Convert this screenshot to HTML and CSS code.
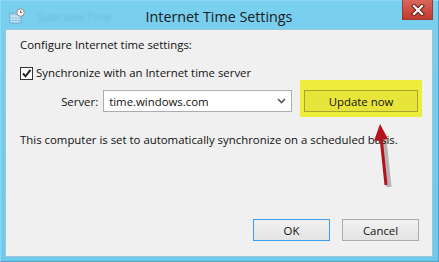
FILE: index.html
```html
<!DOCTYPE html>
<html lang="en">
<head>
    <meta charset="UTF-8">
    <title>Internet Time Settings</title>
    <link rel="stylesheet" href="styles.css">
</head>
<body>

    <div class="window">
        <div class="titlebar">
            <svg class="app-icon" width="16" height="16" viewBox="0 0 16 16">
                <rect x="1" y="5" width="11" height="10" fill="#dff3fb" stroke="#6aa6c8"/>
                <rect x="1" y="5" width="11" height="2" fill="#8cc3e0"/>
                <path d="M4 7v8M7 7v8M10 7v8M1 10h11M1 12.5h11" stroke="#8cc3e0" stroke-width="1"/>
                <circle cx="11.5" cy="4.5" r="3.8" fill="#f4f4f4" stroke="#8a8a8a"/>
                <path d="M11.5 2.5v2h1.6" stroke="#555" fill="none" stroke-width="0.9"/>
            </svg>
            <div class="ghost-title">Date and Time</div>
            <div class="title">Internet Time Settings</div>
            <div class="close">
                <svg width="14" height="12" viewBox="0 0 14 12">
                    <path d="M3 2l8 8M11 2l-8 8" stroke="#5a1a14" stroke-width="4" stroke-linecap="square"/>
                    <path d="M3 2l8 8M11 2l-8 8" stroke="#ffffff" stroke-width="2.2" stroke-linecap="square"/>
                </svg>
            </div>
        </div>

        <div class="content">
            <p class="intro">Configure Internet time settings:</p>

            <label class="check-row">
                <span class="checkbox">
                    <svg width="11" height="11" viewBox="0 0 11 11">
                        <path d="M2 5.5l2.5 2.8L9.5 1.8" stroke="#222" stroke-width="2" fill="none"/>
                    </svg>
                </span>
                Synchronize with an Internet time server
            </label>

            <div class="server-row">
                <span class="server-label">Server:</span>
                <div class="combo">
                    <span>time.windows.com</span>
                    <svg width="9" height="6" viewBox="0 0 9 6">
                        <path d="M1 1l3.5 3.5L8 1" stroke="#555" stroke-width="1.6" fill="none"/>
                    </svg>
                </div>
                <div class="highlight">
                    <button class="button update">Update now</button>
                </div>
            </div>

            <p class="info">This computer is set to automatically synchronize on a scheduled basis.</p>

            <div class="actions">
                <button class="button default">OK</button>
                <button class="button">Cancel</button>
            </div>

            <!-- annotation arrow -->
            <svg class="arrow" width="30" height="70" viewBox="0 0 30 70">
                <path d="M15 64L10 16" stroke="rgba(0,0,0,0.25)" stroke-width="5" fill="none"/>
                <path d="M12 62L7 14" stroke="#b5101c" stroke-width="3" fill="none"/>
                <path d="M6 1L0 18L14 16Z" fill="#b5101c"/>
            </svg>
        </div>
    </div>

</body>
</html>
```

FILE: styles.css
```css
body {
    margin: 0;
    padding: 0;
    background-color: #ffffff;
    font-family: "Open Sans", "Noto Sans", sans-serif;
}
.window {
    position: relative;
    width: 428px;
    height: 257px;
    padding: 0 5px 3px 4px;
    background: linear-gradient(#79cfee, #6ecaec);
    border: 1px solid #4f9fc4;
    border-top-color: #8fd8f3;
    border-left-color: #8fd8f3;
}
.titlebar {
    position: relative;
    height: 28px;
    display: flex;
    align-items: center;
}
.app-icon {
    margin: 2px 0 0 4px;
}
.ghost-title {
    margin-left: 12px;
    margin-top: 3px;
    font-size: 11px;
    color: rgba(60, 110, 140, 0.2);
    filter: blur(1px);
}
.title {
    position: absolute;
    left: 50%;
    top: 6px;
    transform: translateX(-50%);
    white-space: nowrap;
    font-size: 14.3px;
    color: #1a1a1a;
}
.close {
    position: absolute;
    right: 0;
    top: -1px;
    width: 31px;
    height: 20px;
    background: linear-gradient(#d9675b, #c2392c);
    border: 1px solid #9a3a32;
    border-top: none;
    box-sizing: border-box;
    display: flex;
    align-items: center;
    justify-content: center;
}
.content {
    position: relative;
    height: 226px;
    background-color: #f0f0f0;
    border: 1px solid #9fc6d8;
    font-size: 11.4px;
    color: #111;
    padding: 0 14px;
}
.intro {
    margin: 7px 0 0 0;
    line-height: 16px;
}
.check-row {
    display: flex;
    align-items: center;
    margin-top: 12px;
    line-height: 16px;
}
.checkbox {
    width: 11px;
    height: 11px;
    border: 1px solid #333;
    background: #fff;
    margin-right: 3px;
    display: flex;
}
.server-row {
    display: flex;
    align-items: center;
    margin-top: 9px;
}
.server-label {
    width: 80px;
    text-align: right;
}
.combo {
    height: 20px;
    width: 181px;
    margin-left: 5px;
    background: #fff;
    border: 1px solid #abadb3;
    display: flex;
    align-items: center;
    justify-content: space-between;
    padding: 0 5px 0 5px;
}
.highlight {
    position: relative;
    z-index: 0;
    margin-left: 12px;
    display: flex;
}
.highlight::before {
    content: "";
    position: absolute;
    top: -10px;
    bottom: -5px;
    left: -4px;
    right: -4px;
    z-index: -1;
    background-color: #efed3c;
}
.button {
    font-family: "Open Sans", "Noto Sans", sans-serif;
    font-size: 11.4px;
    color: #111;
    width: 77px;
    height: 22px;
    padding: 0;
    background: linear-gradient(#f1f1f1, #e4e4e4);
    border: 1px solid #acacac;
}
.button.update {
    width: 114px;
    background: #e7e53a;
    border-color: #a7a530;
}
.button.default {
    border-color: #3c9cf0;
}
.info {
    margin: 20px 0 0 0;
    line-height: 16px;
}
.actions {
    position: absolute;
    right: 13px;
    bottom: 15px;
    display: flex;
    gap: 12px;
}
.arrow {
    position: absolute;
    left: 368px;
    top: 93px;
}
```
